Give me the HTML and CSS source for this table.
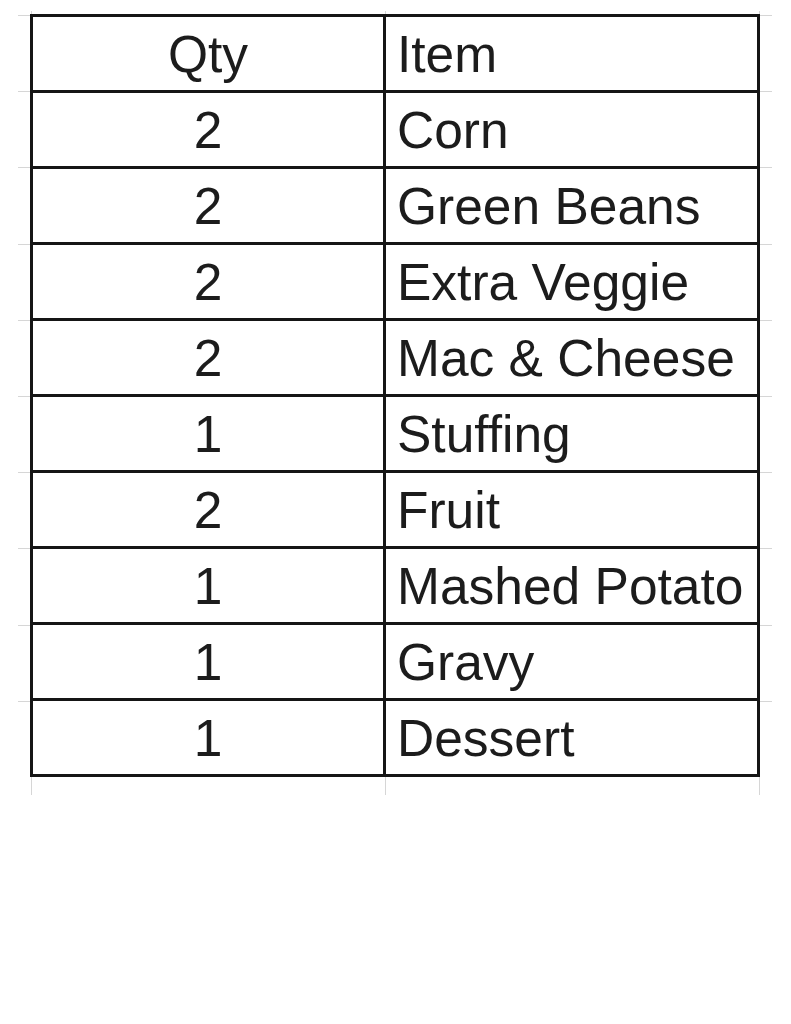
FILE: index.html
```html
<!DOCTYPE html>
<html lang="en">
<head>
<meta charset="utf-8">
<title>Qty / Item</title>
<link rel="stylesheet" href="styles.css">
</head>
<body>
<div class="sheet">
  <table class="list">
    <tr><td class="qty">Qty</td><td class="item">Item</td></tr>
    <tr><td class="qty">2</td><td class="item">Corn</td></tr>
    <tr><td class="qty">2</td><td class="item">Green Beans</td></tr>
    <tr><td class="qty">2</td><td class="item">Extra Veggie</td></tr>
    <tr><td class="qty">2</td><td class="item">Mac &amp; Cheese</td></tr>
    <tr><td class="qty">1</td><td class="item">Stuffing</td></tr>
    <tr><td class="qty">2</td><td class="item">Fruit</td></tr>
    <tr><td class="qty">1</td><td class="item">Mashed Potato</td></tr>
    <tr><td class="qty">1</td><td class="item">Gravy</td></tr>
    <tr><td class="qty">1</td><td class="item">Dessert</td></tr>
  </table>
</div>
</body>
</html>
```
FILE: styles.css
```css
html, body {
  margin: 0;
  padding: 0;
  background: #ffffff;
}

body {
  font-family: "Liberation Sans", Arial, sans-serif;
  color: #1c1c1c;
}

.sheet {
  display: inline-block;
  margin: 11px 0 0 18px;
  padding: 3px 12px 18px 12px;
  background-color: #ffffff;
  background-image:
    linear-gradient(#d6d6d6, #d6d6d6),
    linear-gradient(#d6d6d6, #d6d6d6),
    linear-gradient(#d6d6d6, #d6d6d6),
    repeating-linear-gradient(to bottom,
      transparent 0, transparent 4px,
      #d6d6d6 4px, #d6d6d6 5px,
      transparent 5px, transparent 76.2px);
  background-size:
    1px 100%,
    1px 100%,
    1px 100%,
    100% calc(100% - 18px);
  background-position:
    13px 0,
    367px 0,
    741px 0,
    0 0;
  background-repeat: no-repeat;
}

.list {
  border-collapse: collapse;
  border: 3px solid #151515;
  background: #ffffff;
}

.list td {
  border: 3px solid #151515;
  height: 71px;
  padding: 2px 0 0 0;
  font-size: 51.5px;
  line-height: 1;
  vertical-align: middle;
}

.qty {
  width: 350px;
  text-align: center;
}

.list .item {
  width: 360px;
  padding-left: 11px;
  text-align: left;
  white-space: nowrap;
}
```
